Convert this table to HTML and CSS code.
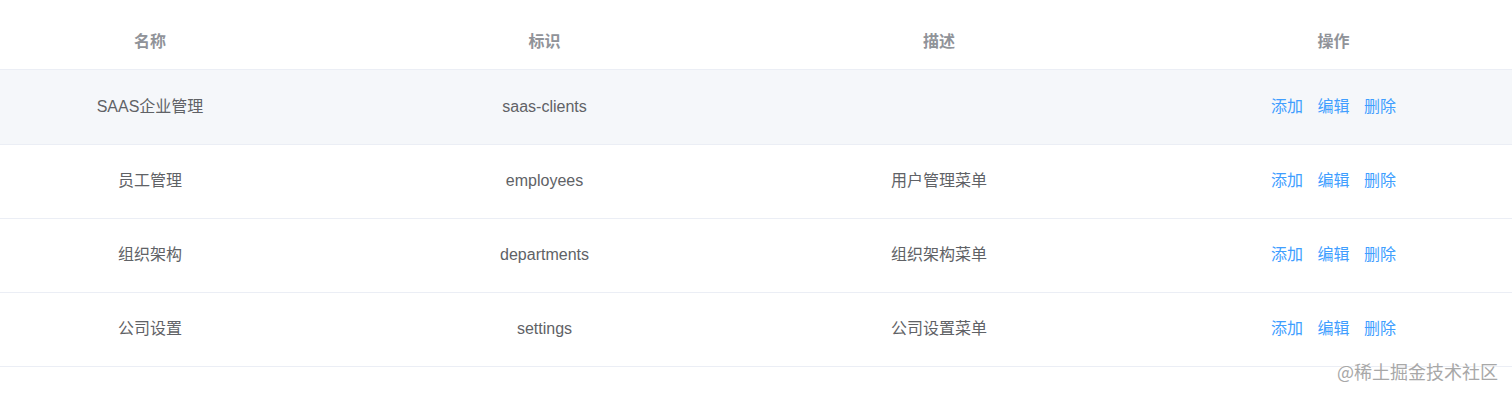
FILE: index.html
```html
<!DOCTYPE html>
<html lang="zh-CN">
<head>
<meta charset="utf-8">
<title>菜单列表</title>
<link rel="stylesheet" href="styles.css">
</head>
<body>
<div class="page">
  <div class="table">
    <div class="row head">
      <div class="cell">名称</div>
      <div class="cell">标识</div>
      <div class="cell">描述</div>
      <div class="cell">操作</div>
    </div>
    <div class="row hover">
      <div class="cell">SAAS企业管理</div>
      <div class="cell">saas-clients</div>
      <div class="cell"></div>
      <div class="cell ops"><a>添加</a><a>编辑</a><a>删除</a></div>
    </div>
    <div class="row">
      <div class="cell">员工管理</div>
      <div class="cell">employees</div>
      <div class="cell">用户管理菜单</div>
      <div class="cell ops"><a>添加</a><a>编辑</a><a>删除</a></div>
    </div>
    <div class="row">
      <div class="cell">组织架构</div>
      <div class="cell">departments</div>
      <div class="cell">组织架构菜单</div>
      <div class="cell ops"><a>添加</a><a>编辑</a><a>删除</a></div>
    </div>
    <div class="row">
      <div class="cell">公司设置</div>
      <div class="cell">settings</div>
      <div class="cell">公司设置菜单</div>
      <div class="cell ops"><a>添加</a><a>编辑</a><a>删除</a></div>
    </div>
  </div>
  <div class="watermark">@稀土掘金技术社区</div>
</div>
</body>
</html>
```

FILE: styles.css
```css
html, body {
  margin: 0;
  padding: 0;
  background: #fff;
  overflow: hidden;
}
.page {
  position: relative;
  width: 1512px;
  height: 394px;
  overflow: hidden;
  font-family: "Liberation Sans", "Noto Sans CJK SC", sans-serif;
  font-size: 16px;
  color: #606266;
}
.table {
  width: 1578px;
  margin-left: -47.25px;
  padding-top: 12px;
}
.row {
  display: grid;
  grid-template-columns: repeat(4, 394.5px);
  height: 73px;
  border-bottom: 1px solid #ebeef5;
}
.row.head {
  height: 57px;
  color: #909399;
  font-weight: bold;
}
.row.hover {
  height: 74px;
  background: #f5f7fa;
}
.cell {
  display: flex;
  align-items: center;
  justify-content: center;
  line-height: 22px;
  padding-bottom: 2px;
  box-sizing: border-box;
}
.head .cell {
  padding-top: 2px;
  padding-bottom: 0;
}
.hover .cell {
  padding-bottom: 1px;
}
.ops {
  gap: 14.5px;
}
.ops a {
  color: #409eff;
  cursor: pointer;
}
.watermark {
  position: absolute;
  right: 14px;
  top: 358px;
  font-size: 18px;
  color: #a8a8a8;
  font-family: "Noto Sans CJK SC", sans-serif;
  line-height: 26px;
  text-shadow: 0 0 2px #fff;
}
```
